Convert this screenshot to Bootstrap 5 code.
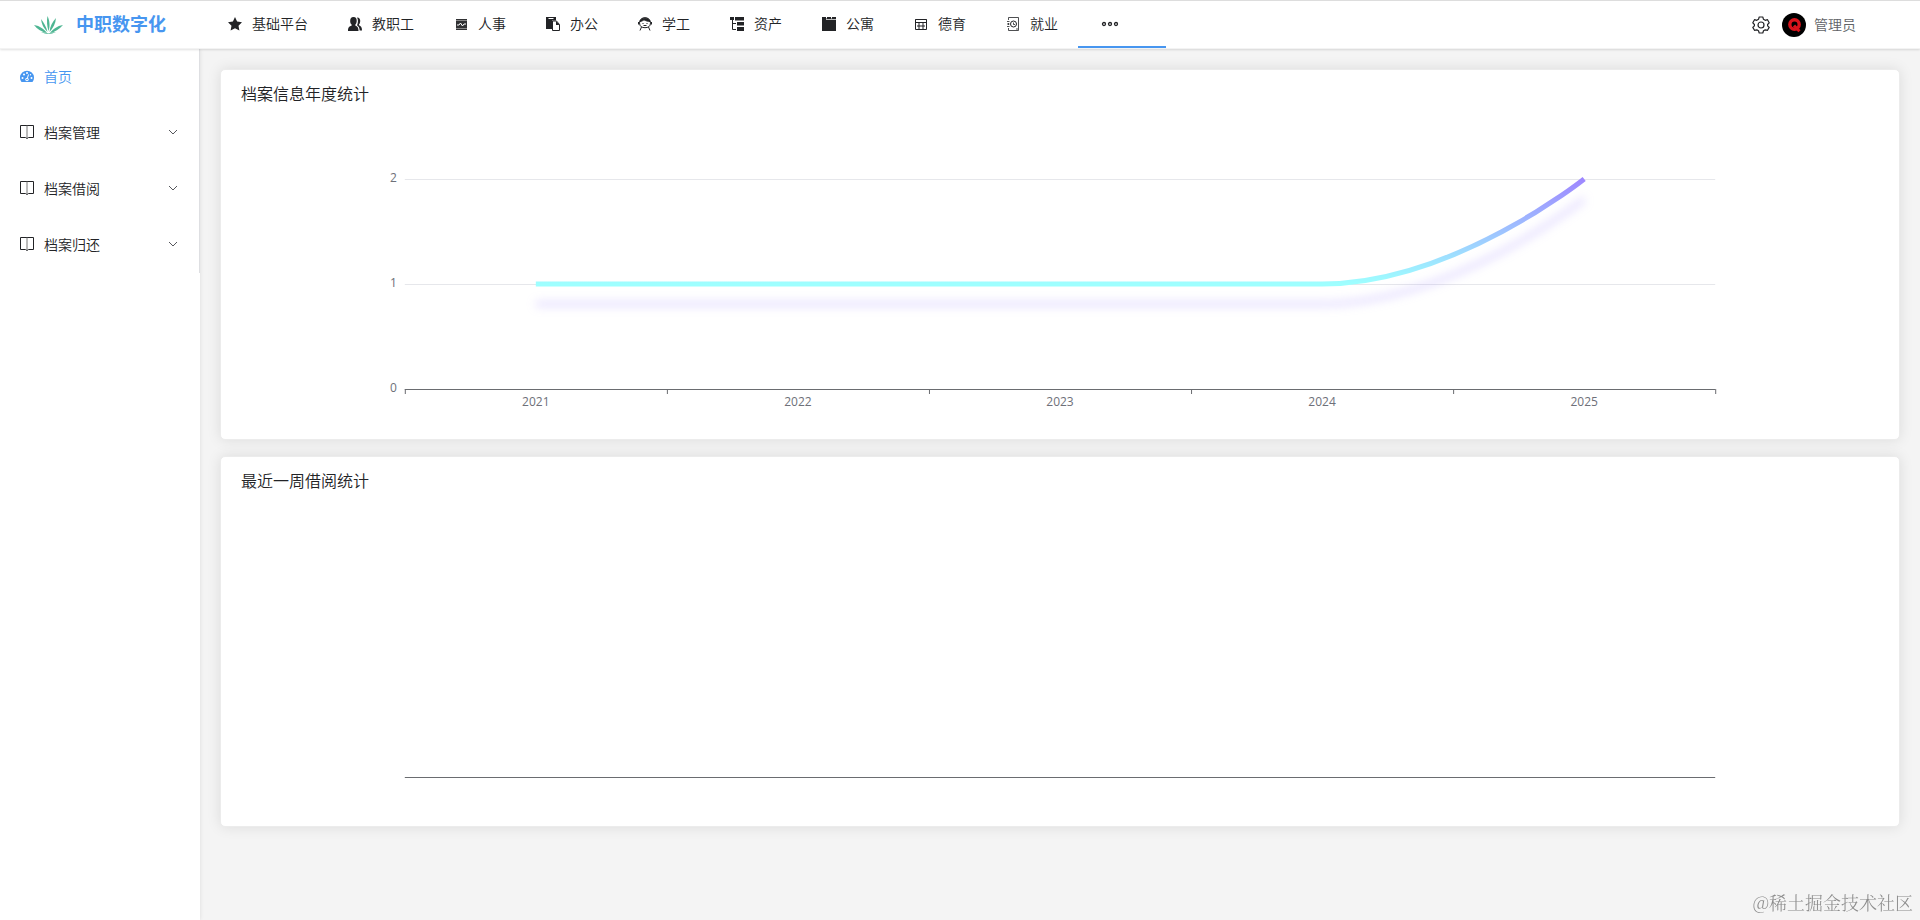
<!DOCTYPE html>
<html lang="zh-CN">
<head>
<meta charset="utf-8">
<meta name="viewport" content="width=device-width, initial-scale=1">
<title>中职数字化</title>
<link href="https://cdn.jsdelivr.net/npm/bootstrap@5.3.0/dist/css/bootstrap.min.css" rel="stylesheet">
<style>
  :root { --brand: #4796f0; --ink: #222326; }
  body { font-family: "Open Sans", "Noto Sans CJK SC", sans-serif; font-size: 14px; color: var(--ink); background: #f4f4f4; }
  svg { display: block; flex-shrink: 0; }
  .top-bar { height: 49px; border-top: 1px solid #ddd; border-bottom: 1px solid #f3f3f3; background: #fff; box-shadow: 0 1px 2px rgba(0, 0, 0, .12); z-index: 2; }
  .brand-box { width: 208px; padding-left: 33px; gap: 12px; font-size: 18px; color: var(--brand); }
  .top-link { gap: 10px; padding: 0 20px; color: var(--ink); border: 0; border-bottom: 2px solid transparent; background: none; font-weight: 350; }
  .top-link.active { border-bottom-color: var(--brand); padding-right: 44px; }
  .user-area { padding-right: 64px; gap: 12px; }
  .plain-btn { border: 0; background: none; padding: 0; color: var(--ink); }
  .user-btn { gap: 8px; color: #606266; font-weight: 350; }
  .side-bar { width: 200px; background: #fff; box-shadow: 0 0 4px rgba(0, 0, 0, .1); z-index: 1; }
  .side-menu { border-right: 1px solid #dedfe2; }
  .side-link { height: 56px; width: 100%; padding: 0 21px 2px 20px; gap: 10px; color: var(--ink); border: 0; background: none; font-weight: 350; text-align: left; }
  .side-link.active { color: var(--brand); }
  .main-area { padding: 20px; gap: 16px; min-width: 0; }
  .stat-card { border: 1px solid #ececec; border-radius: 5px; box-shadow: 0 0 14px rgba(0, 0, 0, .1); padding: 12px 20px 0; }
  .stat-title { font-size: 16px; line-height: 24px; font-weight: 350; color: var(--ink); margin: 0; }
  .chart { width: 100%; height: 333px; }
  .chart text { font-size: 12px; fill: #6e7079; }
  .split-line { fill: #e6e7eb; }
  .axis-line { fill: #6a6c70; }
  .curve { overflow: visible; filter: drop-shadow(0 20px 5px rgba(158, 135, 255, .3)); }
  .curve path { fill: none; stroke: url(#rise); stroke-width: 5; vector-effect: non-scaling-stroke; }
  .watermark { position: fixed; right: 7px; bottom: 4px; font: 300 18px/28px "Noto Serif CJK SC", "Liberation Serif", "Noto Sans CJK SC", serif; color: #8c8c8c; }
</style>
</head>
<body class="min-vh-100 d-flex flex-column">

<header class="top-bar d-flex position-relative">
  <a href="#" class="brand-box d-flex align-items-center text-decoration-none fw-bold">
    <svg width="31" height="20" viewBox="0 0 31 20" fill="#4db592" aria-hidden="true">
      <path d="M14.500 1C17 6 17 12 15.500 16C14 11 13.500 6 14.500 1Z"/>
      <path d="M8 4C11 8 13.500 12 14.500 17C10.500 13 8.500 9 8 4Z"/>
      <path d="M23 3C22.500 9 20 13 16.500 17C17 11 19.500 7 23 3Z"/>
      <path d="M1 10C7 11 11 14 14 18C8 16.500 4 14 1 10Z"/>
      <path d="M30 10C26 14.500 22 17 17 18C20 14 24 11 30 10Z"/>
      <path d="M8 17Q13 17 15.500 18.500Q18 17 23 17Q19 19 15.500 19Q12 19 8 17Z"/>
    </svg>
    <span>中职数字化</span>
  </a>
  <nav class="d-flex flex-grow-1">
    <a href="#" class="top-link d-flex align-items-center text-decoration-none">
      <svg width="14" height="14" viewBox="0 0 14 14" fill="currentColor"><path d="M7 0L9.100 4.500L14 5.200L10.500 8.700L11.400 13.600L7 11.300L2.600 13.600L3.500 8.700L0 5.200L4.900 4.500Z"/></svg>基础平台</a>
    <a href="#" class="top-link d-flex align-items-center text-decoration-none">
      <svg width="14" height="14" viewBox="0 0 14 14" fill="currentColor"><path d="M5.500 0C8 0 9 2 8.700 4.500C8.500 6 8 7 7.300 7.700V8.500C9.500 9.500 10.500 10.500 10.500 14H0C0 10.500 1 9.500 3.700 8.500V7.700C2.800 7 2.300 6 2.200 4.500C2 2 3 0 5.500 0Z"/><path d="M9 .5C11.500 .5 12.500 2.500 12.200 4.500C12 6 11.500 7 11 7.500V8.300C13 9.300 14 10.500 14 13.500H11.700C11.500 11 10.700 9.500 9 8.300C10.200 6 10.400 2.500 9 .5Z"/></svg>教职工</a>
    <a href="#" class="top-link d-flex align-items-center text-decoration-none">
      <svg width="14" height="14" viewBox="0 0 14 14"><path d="M2 2H13V13H2Z" fill="#303133"/><path d="M2 3.500H13M2 11.500H13" stroke="#888" fill="none"/><path d="M3 8H5L6.500 6L8.500 9L10 7H12" stroke="#fff" fill="none"/></svg>人事</a>
    <a href="#" class="top-link d-flex align-items-center text-decoration-none">
      <svg width="14" height="14" viewBox="0 0 14 14" fill="currentColor"><path d="M0 0H10V3.500H6V12H0Z"/><path d="M2.500 1.500H7.500" stroke="#fff"/><path d="M6.500 4H10.500L13.500 7.500V13.500H6.500Z" fill="#fff" stroke="currentColor"/><path d="M10 4V8H13.500Z"/></svg>办公</a>
    <a href="#" class="top-link d-flex align-items-center text-decoration-none">
      <svg width="14" height="14" viewBox="0 0 14 14" fill="none" stroke="currentColor"><path d="M1.500 6C1.500 2.500 4 .700 7 .700S12.500 2.500 12.500 6S10 10.700 7 10.700S1.500 9.500 1.500 6Z"/><path d="M2 4.500C4 4.200 5 3.500 6 2.800C8 4 10 4.300 12 4.500C11 0 3 0 2 4.500Z" fill="currentColor"/><path d="M.5 5V7.500M13.500 5V7.500M5.500 8.500H8.500M3.500 10L2 13.500M10.500 10L12 13.500"/><path d="M4.500 6.500H5.500M8.500 6.500H9.500"/></svg>学工</a>
    <a href="#" class="top-link d-flex align-items-center text-decoration-none">
      <svg width="14" height="14" viewBox="0 0 14 14"><path d="M0 0H4V3H0ZM5 0H14V3.500H5ZM7 5H14V8.500H7ZM7 10H14V14H7Z" fill="currentColor"/><path d="M2.500 2V12.500H6M2.500 6.500H6" fill="none" stroke="currentColor"/></svg>资产</a>
    <a href="#" class="top-link d-flex align-items-center text-decoration-none">
      <svg width="14" height="14" viewBox="0 0 14 14"><path d="M0 0H4V1.500H5V0H9V1.500H10V0H14V14H0Z" fill="currentColor"/><path d="M4 2.500H14" stroke="#bbb"/></svg>公寓</a>
    <a href="#" class="top-link d-flex align-items-center text-decoration-none">
      <svg width="14" height="14" viewBox="0 0 14 14" fill="none" stroke="currentColor"><path d="M1.500 2.500H12.500V12.500H1.500ZM1.500 5.500H12.500M3 9H11M5 5.500V12M9 5.500V12"/><path d="M1.500 2.500H12.500"/></svg>德育</a>
    <a href="#" class="top-link d-flex align-items-center text-decoration-none">
      <svg width="14" height="14" viewBox="0 0 14 14" fill="none" stroke="currentColor"><path d="M2.500 3V.5H12.500V13.500H2.500V11M2.500 6V8M1 4.500H3.500M1 7H3.500M1 9.500H3.500" stroke-width=".8"/><circle cx="7.500" cy="7" r="3"/><path d="M7.500 5.500V7.500H9M10 12H12" stroke-width=".8"/></svg>就业</a>
    <button type="button" class="top-link active d-flex align-items-center" aria-label="更多">
      <svg width="24" height="14" viewBox="0 0 24 14" fill="none" stroke="currentColor" stroke-width="1.300"><circle cx="6" cy="7" r="1.500"/><circle cx="12" cy="7" r="1.500"/><circle cx="18" cy="7" r="1.500"/></svg>
    </button>
  </nav>
  <div class="user-area d-flex align-items-center">
    <button type="button" class="plain-btn" aria-label="设置">
      <svg width="18" height="18" viewBox="0 0 18 18" fill="none" stroke="currentColor" stroke-width="1.200"><path d="M7.200 1H10.800L11.500 3.300L13.200 4.300L15.500 3.700L17.200 6.800L15.600 8.500V9.800L17.200 11.400L15.500 14.300L13.200 13.800L11.500 14.800L10.800 17H7.200L6.500 14.800L4.800 13.800L2.500 14.300L.8 11.400L2.400 9.800V8.500L.8 6.800L2.500 3.700L4.800 4.300L6.500 3.300Z" stroke-linejoin="round"/><circle cx="9" cy="9" r="3"/></svg>
    </button>
    <button type="button" class="plain-btn user-btn d-flex align-items-center">
      <svg width="24" height="24" viewBox="0 0 24 24"><circle cx="12" cy="12" r="12" fill="#000"/><circle cx="12.500" cy="11.500" r="4.700" fill="none" stroke="#d9131c" stroke-width="3.400"/><path d="M12 12.500L17.500 18.300" stroke="#d9131c" stroke-width="3"/></svg>
      管理员
    </button>
  </div>
</header>

<div class="d-flex flex-grow-1">
  <aside class="side-bar flex-shrink-0 position-relative">
    <nav class="side-menu">
      <a href="#" class="side-link active d-flex align-items-center text-decoration-none">
        <svg width="14" height="14" viewBox="0 0 14 14"><path d="M1.500 13A7 7 0 1 1 12.500 13Z" fill="currentColor"/><g fill="#fff"><circle cx="2.500" cy="9" r="1"/><circle cx="4" cy="5.500" r="1"/><circle cx="7" cy="4" r="1"/><circle cx="11.500" cy="9" r="1"/><circle cx="10.500" cy="5.700" r=".7"/><circle cx="7" cy="10.500" r="1.700"/></g><path d="M7 10.500L8.500 5.500" stroke="#fff"/><circle cx="7" cy="10.500" r=".8" fill="currentColor"/></svg>
        首页</a>
      <button type="button" class="side-link d-flex align-items-center">
        <svg width="14" height="14" viewBox="0 0 14 14" fill="none" stroke="currentColor"><path d="M7 .5H.5V12.500H5.500L7 13.500L8.500 12.500H13.500V.5H7"/><path d="M7 .5V13" stroke="#777"/></svg>
        <span class="flex-grow-1">档案管理</span>
        <svg width="10" height="6" viewBox="0 0 10 6" fill="none" stroke="#55575c"><path d="M1 1L5 5L9 1"/></svg></button>
      <button type="button" class="side-link d-flex align-items-center">
        <svg width="14" height="14" viewBox="0 0 14 14" fill="none" stroke="currentColor"><path d="M7 .5H.5V12.500H5.500L7 13.500L8.500 12.500H13.500V.5H7"/><path d="M7 .5V13" stroke="#777"/></svg>
        <span class="flex-grow-1">档案借阅</span>
        <svg width="10" height="6" viewBox="0 0 10 6" fill="none" stroke="#55575c"><path d="M1 1L5 5L9 1"/></svg></button>
      <button type="button" class="side-link d-flex align-items-center">
        <svg width="14" height="14" viewBox="0 0 14 14" fill="none" stroke="currentColor"><path d="M7 .5H.5V12.500H5.500L7 13.500L8.500 12.500H13.500V.5H7"/><path d="M7 .5V13" stroke="#777"/></svg>
        <span class="flex-grow-1">档案归还</span>
        <svg width="10" height="6" viewBox="0 0 10 6" fill="none" stroke="#55575c"><path d="M1 1L5 5L9 1"/></svg></button>
    </nav>
  </aside>

  <main class="main-area flex-grow-1 d-flex flex-column">
    <section class="card stat-card">
      <h2 class="stat-title">档案信息年度统计</h2>
      <svg class="chart" role="img" aria-label="档案信息年度统计">
        <defs>
          <linearGradient id="rise" gradientUnits="userSpaceOnUse" x1="0" y1="105" x2="0" y2="0">
            <stop offset="0" stop-color="#9effff"/><stop offset="1" stop-color="#9e87ff"/>
          </linearGradient>
        </defs>
        <svg x="10%" y="73" width="80%" height="210" overflow="visible">
          <rect class="split-line" y="0" width="100%" height="1"/>
          <rect class="split-line" y="105" width="100%" height="1"/>
          <rect class="axis-line" y="210" width="100%" height="1"/>
          <g class="axis-line">
            <rect x="0" y="210" width="1" height="5"/><rect x="20%" y="210" width="1" height="5"/>
            <rect x="40%" y="210" width="1" height="5"/><rect x="60%" y="210" width="1" height="5"/>
            <rect x="80%" y="210" width="1" height="5"/><rect x="100%" y="210" width="1" height="5"/>
          </g>
          <g text-anchor="end">
            <text x="-8" y="3">2</text><text x="-8" y="108">1</text><text x="-8" y="213">0</text>
          </g>
          <g text-anchor="middle">
            <text x="10%" y="227">2021</text><text x="30%" y="227">2022</text><text x="50%" y="227">2023</text>
            <text x="70%" y="227">2024</text><text x="90%" y="227">2025</text>
          </g>
          <g class="curve">
            <svg width="100%" height="210" viewBox="0 0 1000 210" preserveAspectRatio="none" overflow="visible">
              <path d="M100 105H700C800 105 900 0 900 0"/>
            </svg>
          </g>
        </svg>
      </svg>
    </section>
    <section class="card stat-card">
      <h2 class="stat-title">最近一周借阅统计</h2>
      <svg class="chart" role="img" aria-label="最近一周借阅统计">
        <rect class="axis-line" x="10%" y="284" width="80%" height="1"/>
      </svg>
    </section>
  </main>
</div>

<div class="watermark">@稀土掘金技术社区</div>
<script src="https://cdn.jsdelivr.net/npm/bootstrap@5.3.0/dist/js/bootstrap.bundle.min.js"></script>
</body>
</html>
